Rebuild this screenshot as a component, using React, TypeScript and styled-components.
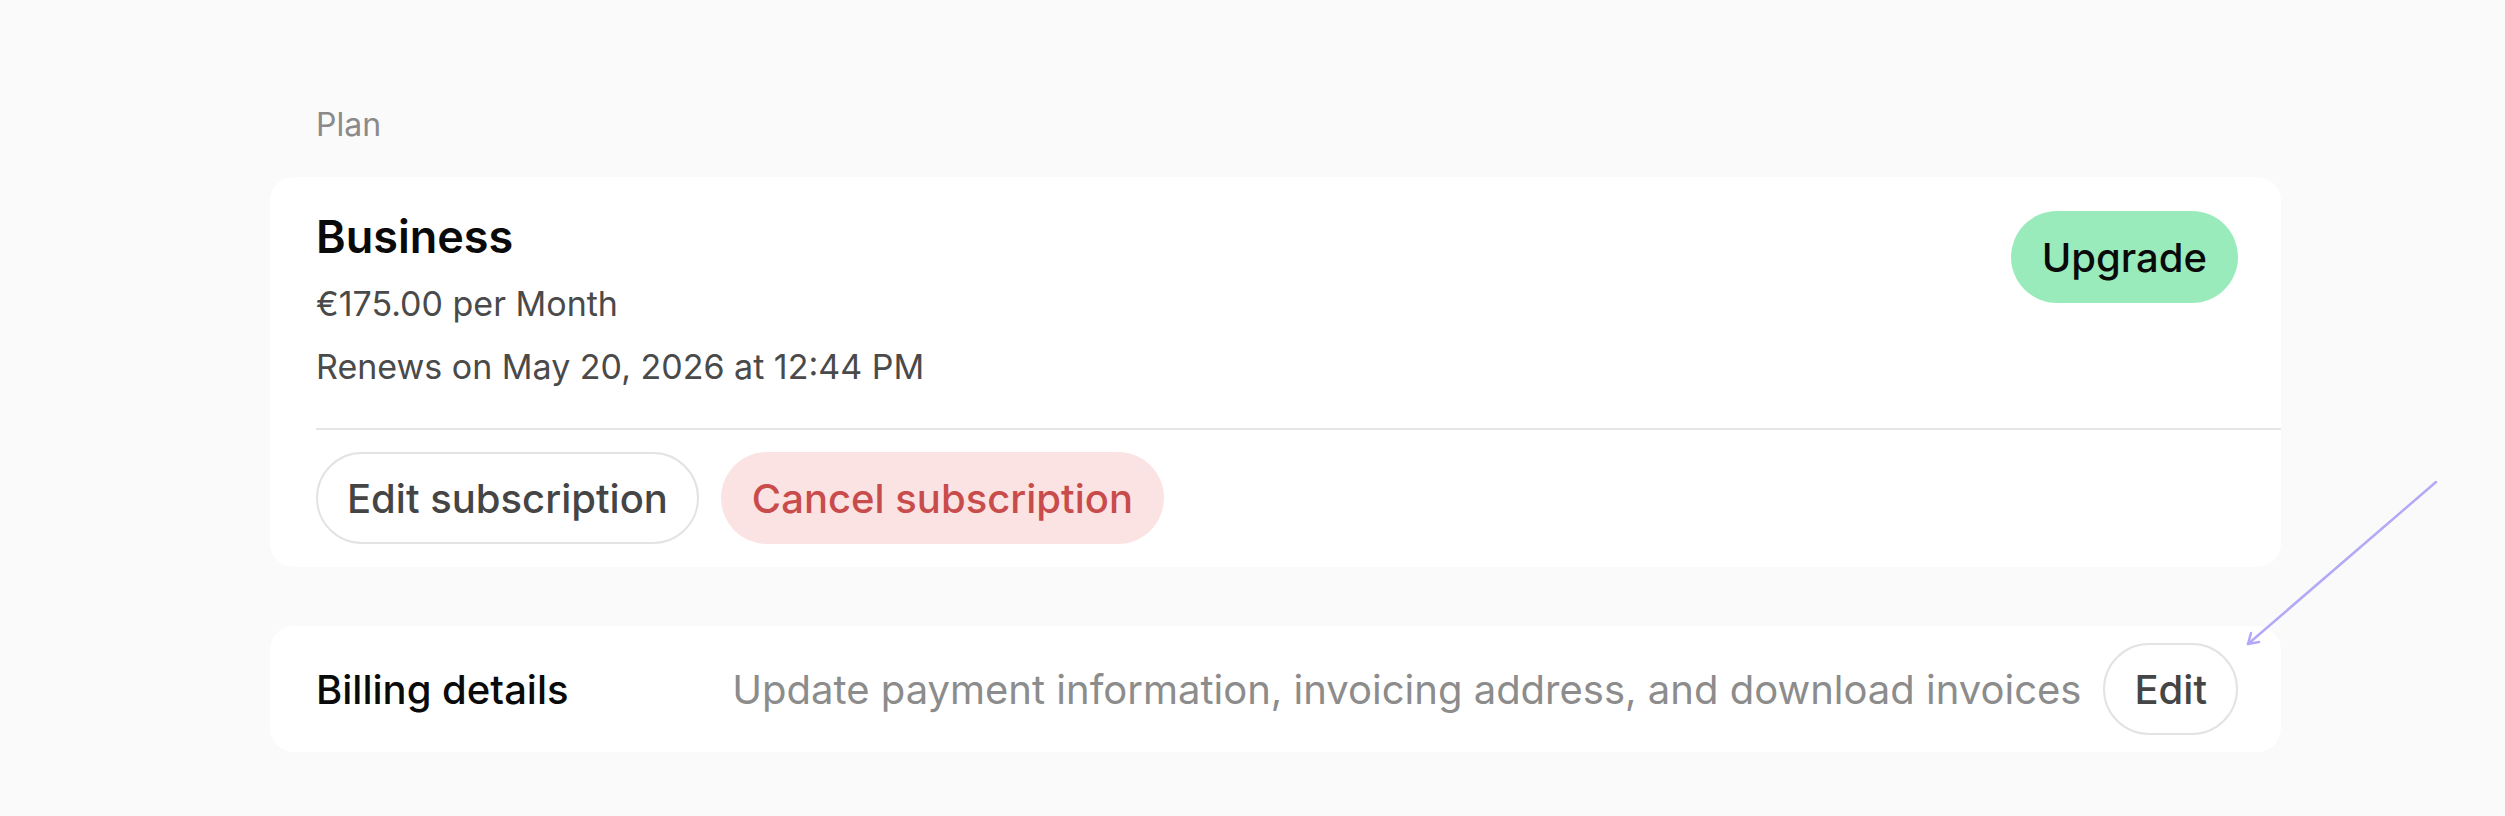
import styled, { createGlobalStyle } from 'styled-components';

const GlobalStyle = createGlobalStyle`
  html, body {
    margin: 0;
    padding: 0;
    background: #fafafa;
    font-family: Inter, "Noto Sans", "Liberation Sans", sans-serif;
  }
`;

const Page = styled.div`
  position: relative;
  width: 2505px;
  height: 816px;
  padding: 106px 0 0 270px;
  box-sizing: border-box;
`;

const Section = styled.div`
  width: 2011px;
  display: flex;
  flex-direction: column;
`;

const SectionLabel = styled.p`
  margin: 0 0 33px 46px;
  font-size: 32px;
  line-height: 38px;
  color: #8a8a8a;
`;

const Card = styled.div`
  background: #ffffff;
  border-radius: 24px;
`;

const PlanTop = styled.div`
  display: flex;
  justify-content: space-between;
  align-items: flex-start;
  padding: 34px 43px 39px 46px;
`;

const PlanInfo = styled.div`
  display: flex;
  flex-direction: column;
  gap: 19px;
`;

const PlanName = styled.h2`
  margin: 0;
  font-size: 45px;
  line-height: 52px;
  font-weight: 600;
  color: #0a0a0a;
`;

const Meta = styled.p`
  margin: 0;
  font-size: 34px;
  line-height: 44px;
  color: #4a4a4a;
`;

const Divider = styled.hr`
  margin: 0 0 0 46px;
  border: 0;
  border-top: 2px solid #e6e6e6;
`;

const Actions = styled.div`
  display: flex;
  gap: 22px;
  padding: 22px 46px 23px;
`;

const Pill = styled.button<{ $variant: 'outline' | 'danger' | 'success' }>`
  height: 92px;
  padding: 0 29px;
  border-radius: 999px;
  font-family: inherit;
  font-size: 40px;
  font-weight: 500;
  cursor: pointer;
  border: 2px solid
    ${(p) => (p.$variant === 'outline' ? '#e3e3e3' : 'transparent')};
  background: ${(p) =>
    p.$variant === 'danger'
      ? '#fbe3e3'
      : p.$variant === 'success'
      ? '#99ebbb'
      : '#ffffff'};
  color: ${(p) =>
    p.$variant === 'danger'
      ? '#c94c4c'
      : p.$variant === 'success'
      ? '#0a0a0a'
      : '#454545'};
`;

const BillingCard = styled(Card)`
  margin-top: 59px;
  display: flex;
  align-items: center;
  gap: 22px;
  padding: 17px 43px 17px 46px;
`;

const BillingTitle = styled.span`
  flex: 1;
  font-size: 40px;
  font-weight: 500;
  color: #0a0a0a;
`;

const BillingDesc = styled.span`
  font-size: 40px;
  color: #8c8c8c;
`;

const Arrow = styled.svg`
  position: absolute;
  left: 2230px;
  top: 470px;
`;

export default function App() {
  return (
    <>
      <GlobalStyle />
      <Page>
        <Section>
          <SectionLabel>Plan</SectionLabel>
          <Card>
            <PlanTop>
              <PlanInfo>
                <PlanName>Business</PlanName>
                <Meta>€175.00 per Month</Meta>
                <Meta>Renews on May 20, 2026 at 12:44 PM</Meta>
              </PlanInfo>
              <Pill $variant="success">Upgrade</Pill>
            </PlanTop>
            <Divider />
            <Actions>
              <Pill $variant="outline">Edit subscription</Pill>
              <Pill $variant="danger">Cancel subscription</Pill>
            </Actions>
          </Card>
          <BillingCard>
            <BillingTitle>Billing details</BillingTitle>
            <BillingDesc>
              Update payment information, invoicing address, and download invoices
            </BillingDesc>
            <Pill $variant="outline">Edit</Pill>
          </BillingCard>
        </Section>
        <Arrow width="220" height="190" viewBox="0 0 220 190">
          <g
            fill="none"
            stroke="#b2a9f7"
            strokeWidth="2.5"
            strokeLinecap="round"
            strokeLinejoin="round"
          >
            <path d="M206 12 L18 174" />
            <path d="M18 174 L21 163 M18 174 L29 172" />
          </g>
        </Arrow>
      </Page>
    </>
  );
}
